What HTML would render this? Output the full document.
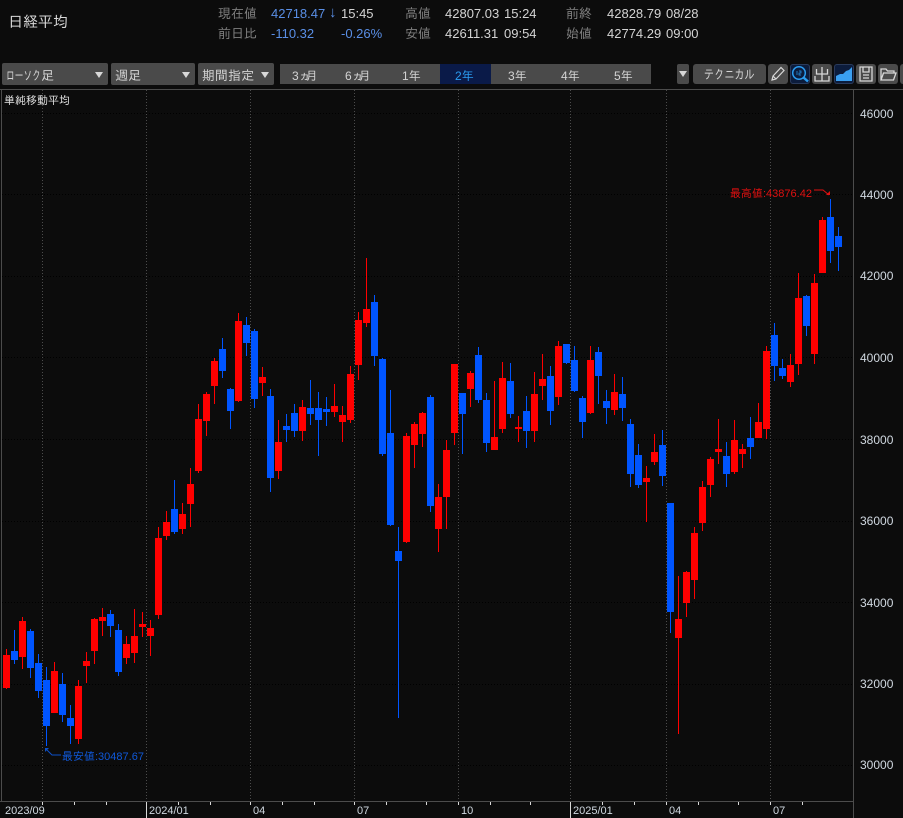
<!DOCTYPE html>
<html lang="ja"><head><meta charset="utf-8"><title>日経平均</title>
<style>
html,body{margin:0;padding:0;background:#0c0c0c}
#p{position:relative;width:903px;height:818px;overflow:hidden;background:#0c0c0c;font-family:"Liberation Sans","IPAGothic","Noto Sans CJK JP",sans-serif;font-size:13px;color:#d4d4d4}
.t{position:absolute;white-space:nowrap;line-height:16px}
.l{color:#808080}.b{color:#5a8fe6}
.n{display:inline-block;transform-origin:left center}
.k{letter-spacing:-5px}
.box{position:absolute;background:#4a4a4a;border-radius:2px}
.tri{position:absolute;width:0;height:0;border-left:4.5px solid transparent;border-right:4.5px solid transparent;border-top:6px solid #d8d8d8}
.ic{position:absolute;top:64px;width:20px;height:20px;background:#4a4a4a;border-radius:3px}
.ic.on{background:#0c1c3c;box-shadow:inset 0 0 0 1px #2a3a5a}
.ic svg{position:absolute;left:0;top:0}
.y{position:absolute;left:860px;font-size:12px;line-height:14px;color:#d0d8e0}
.x{position:absolute;top:804px;font-size:11px;line-height:14px;color:#d0d8e0}
</style></head><body><div id="p">

<div class="t" style="left:8px;top:15px;font-size:15px;color:#d8d8d8">日経平均</div>
<div class="t l" style="left:218px;top:6px">現在値</div>
<div class="t b" style="left:271px;top:6px">42718.47</div>
<div class="t b" style="left:329px;top:5px;font-size:15px">↓</div>
<div class="t" style="left:341px;top:6px">15:45</div>
<div class="t l" style="left:405px;top:6px">高値</div>
<div class="t" style="left:445px;top:6px">42807.03</div>
<div class="t" style="left:504px;top:6px">15:24</div>
<div class="t l" style="left:566px;top:6px">前終</div>
<div class="t" style="left:607px;top:6px">42828.79</div>
<div class="t" style="left:666px;top:6px">08/28</div>
<div class="t l" style="left:218px;top:26px">前日比</div>
<div class="t b" style="left:271px;top:26px">-110.32</div>
<div class="t b" style="left:341px;top:26px">-0.26%</div>
<div class="t l" style="left:405px;top:26px">安値</div>
<div class="t" style="left:445px;top:26px">42611.31</div>
<div class="t" style="left:504px;top:26px">09:54</div>
<div class="t l" style="left:566px;top:26px">始値</div>
<div class="t" style="left:607px;top:26px">42774.29</div>
<div class="t" style="left:666px;top:26px">09:00</div>

<div class="box" style="left:2px;top:63px;width:106px;height:22px"></div>
<div class="t" style="left:6px;top:68px"><span class="n" style="width:35px;transform:scaleX(.67)">ローソク</span>足</div><div class="tri" style="left:95px;top:72px"></div>
<div class="box" style="left:111px;top:63px;width:84px;height:22px"></div>
<div class="t" style="left:115px;top:68px">週足</div><div class="tri" style="left:182px;top:72px"></div>
<div class="box" style="left:198px;top:63px;width:76px;height:22px"></div>
<div class="t" style="left:202px;top:68px">期間指定</div><div class="tri" style="left:261px;top:72px"></div>

<div class="box" style="left:280px;top:64px;width:371px;height:20px;border-radius:0"></div>
<div style="position:absolute;left:440px;top:64px;width:51px;height:20px;background:#0a1a48"></div>
<div class="t" style="left:292px;top:68px;font-size:12px">3<span class="k">ヵ</span>月</div>
<div class="t" style="left:345px;top:68px;font-size:12px">6<span class="k">ヵ</span>月</div>
<div class="t" style="left:402px;top:68px;font-size:12px">1年</div>
<div class="t" style="left:455px;top:68px;font-size:12px;color:#2a9cf0">2年</div>
<div class="t" style="left:508px;top:68px;font-size:12px">3年</div>
<div class="t" style="left:561px;top:68px;font-size:12px">4年</div>
<div class="t" style="left:614px;top:68px;font-size:12px">5年</div>

<div class="box" style="left:677px;top:64px;width:12px;height:20px"></div><div class="tri" style="left:678.5px;top:71px"></div>
<div class="box" style="left:693px;top:64px;width:73px;height:20px;border-radius:3px"></div>
<div class="t" style="left:704px;top:67px;font-size:13px"><span class="n" style="width:51px;transform:scaleX(.78)">テクニカル</span></div>

<div class="ic" style="left:768px"><svg width="20" height="20" fill="none" stroke="#d8d8d8" stroke-width="1.2"><path d="M4 16l1-4 8-8.500 3 3-8 8.500zM5 12l3 3"/></svg></div>
<div class="ic on" style="left:790px"><svg width="20" height="20" fill="none" stroke="#2a9cf0"><circle cx="9" cy="9" r="6.300" stroke-width="1.500"/><path d="M13.500 13.500l4.500 4" stroke-width="2.500"/><path d="M7 7v4M9 7h2v2h-2v2h2" stroke-width=".7"/></svg></div>
<div class="ic" style="left:812px"><svg width="20" height="20" fill="none" stroke="#d8d8d8" stroke-width="1.300"><path d="M10 3v14M4.500 5v5h11V5M3 12v5h14v-5"/></svg></div>
<div class="ic on" style="left:834px"><svg width="20" height="20"><path d="M2 17v-5l4-2 3 0 3-3 3-1 3-3v14z" fill="#3a9ff0"/></svg></div>
<div class="ic" style="left:856px"><svg width="20" height="20" fill="none" stroke="#d8d8d8" stroke-width="1.300"><path d="M4 3h12v14H4zM7 3v5h6V3M7 11h6M7 14h6"/></svg></div>
<div class="ic" style="left:878px"><svg width="20" height="20" fill="none" stroke="#d8d8d8" stroke-width="1.300"><path d="M3 16V5h5l1.500 2H16v2M3 16l2.500-7H18l-2.500 7z"/></svg></div>
<div class="ic" style="left:900px"></div>

<svg width="903" height="818" style="position:absolute;left:0;top:0" shape-rendering="crispEdges">
<g stroke="#000" stroke-width="1" stroke-dasharray="1 2" fill="none">
<path d="M2 113.500H853M2 194.500H853M2 276.500H853M2 357.500H853M2 439.500H853M2 521.500H853M2 602.500H853M2 684.500H853M2 765.500H853"/>
</g>
<g stroke="#4c4c4c" stroke-width="1" stroke-dasharray="1 2" fill="none">
<path d="M42.500 90V801M146.500 90V801M250.500 90V801M354.500 90V801M458.500 90V801M570.500 90V801M666.500 90V801M770.500 90V801"/>
</g>
<path fill="#ff0000" d="M6 649h1V689h-1zM3 655h7V688h-7zM22 617h1V669h-1zM19 621h7V657h-7zM54 662h1V713h-1zM51 671h7V713h-7zM78 680h1V744h-1zM75 686h7V739h-7zM86 652h1V683h-1zM83 661h7V666h-7zM94 618h1V664h-1zM91 619h7V651h-7zM102 608h1V636h-1zM99 617h7V621h-7zM126 636h1V664h-1zM123 644h7V658h-7zM134 609h1V663h-1zM131 636h7V653h-7zM142 612h1V637h-1zM139 624h7V627h-7zM150 620h1V656h-1zM147 628h7V636h-7zM158 527h1V619h-1zM155 538h7V615h-7zM166 511h1V540h-1zM163 522h7V536h-7zM182 503h1V534h-1zM179 514h7V529h-7zM190 468h1V527h-1zM187 484h7V504h-7zM198 404h1V473h-1zM195 419h7V471h-7zM206 392h1V436h-1zM203 394h7V421h-7zM214 358h1V404h-1zM211 361h7V386h-7zM238 313h1V402h-1zM235 321h7V401h-7zM262 367h1V396h-1zM259 377h7V383h-7zM278 420h1V479h-1zM275 442h7V471h-7zM302 400h1V441h-1zM299 407h7V431h-7zM334 384h1V417h-1zM331 406h7V412h-7zM342 406h1V442h-1zM339 415h7V422h-7zM350 366h1V423h-1zM347 374h7V420h-7zM358 312h1V380h-1zM355 320h7V365h-7zM366 258h1V327h-1zM363 309h7V323h-7zM406 433h1V543h-1zM403 436h7V542h-7zM414 422h1V468h-1zM411 424h7V445h-7zM422 412h1V447h-1zM419 413h7V434h-7zM438 484h1V552h-1zM435 497h7V529h-7zM446 440h1V529h-1zM443 450h7V497h-7zM454 364h1V445h-1zM451 364h7V433h-7zM470 371h1V407h-1zM467 373h7V389h-7zM494 381h1V450h-1zM491 437h7V450h-7zM502 362h1V433h-1zM499 378h7V429h-7zM518 416h1V442h-1zM515 427h7V429h-7zM534 372h1V442h-1zM531 394h7V431h-7zM542 354h1V400h-1zM539 379h7V386h-7zM558 341h1V405h-1zM555 346h7V397h-7zM590 346h1V414h-1zM587 360h7V413h-7zM614 374h1V415h-1zM611 392h7V410h-7zM646 466h1V522h-1zM643 478h7V482h-7zM654 434h1V465h-1zM651 452h7V462h-7zM678 576h1V734h-1zM675 619h7V638h-7zM686 571h1V617h-1zM683 572h7V603h-7zM694 527h1V599h-1zM691 533h7V580h-7zM702 481h1V531h-1zM699 487h7V523h-7zM710 457h1V497h-1zM707 459h7V485h-7zM718 419h1V464h-1zM715 449h7V452h-7zM734 420h1V474h-1zM731 440h7V472h-7zM742 444h1V468h-1zM739 449h7V454h-7zM758 403h1V438h-1zM755 422h7V438h-7zM766 346h1V439h-1zM763 351h7V429h-7zM790 354h1V387h-1zM787 365h7V382h-7zM798 273h1V375h-1zM795 298h7V364h-7zM814 274h1V364h-1zM811 283h7V354h-7zM822 217h1V273h-1zM819 220h7V273h-7z"/>
<path fill="#0055ff" d="M14 630h1V664h-1zM11 651h7V660h-7zM30 629h1V678h-1zM27 631h7V668h-7zM38 654h1V698h-1zM35 663h7V691h-7zM46 667h1V746h-1zM43 680h7V726h-7zM62 673h1V722h-1zM59 684h7V715h-7zM70 705h1V744h-1zM67 718h7V726h-7zM110 610h1V637h-1zM107 614h7V626h-7zM118 624h1V676h-1zM115 630h7V672h-7zM174 480h1V534h-1zM171 509h7V532h-7zM222 338h1V378h-1zM219 349h7V371h-7zM230 388h1V429h-1zM227 389h7V411h-7zM246 317h1V356h-1zM243 325h7V343h-7zM254 329h1V408h-1zM251 331h7V399h-7zM270 389h1V492h-1zM267 396h7V478h-7zM286 414h1V442h-1zM283 426h7V430h-7zM294 404h1V437h-1zM291 413h7V431h-7zM310 380h1V425h-1zM307 408h7V414h-7zM318 392h1V456h-1zM315 408h7V420h-7zM326 397h1V426h-1zM323 409h7V412h-7zM374 295h1V366h-1zM371 302h7V356h-7zM382 358h1V456h-1zM379 359h7V454h-7zM390 390h1V526h-1zM387 433h7V525h-7zM398 527h1V718h-1zM395 551h7V561h-7zM430 395h1V512h-1zM427 397h7V506h-7zM462 393h1V454h-1zM459 393h7V414h-7zM478 347h1V403h-1zM475 355h7V400h-7zM486 393h1V452h-1zM483 400h7V443h-7zM510 363h1V418h-1zM507 381h7V414h-7zM526 396h1V448h-1zM523 411h7V431h-7zM550 366h1V425h-1zM547 376h7V411h-7zM566 344h1V364h-1zM563 344h7V363h-7zM574 346h1V392h-1zM571 360h7V391h-7zM582 396h1V438h-1zM579 398h7V422h-7zM598 347h1V404h-1zM595 352h7V376h-7zM606 390h1V424h-1zM603 401h7V408h-7zM622 377h1V421h-1zM619 394h7V408h-7zM630 419h1V487h-1zM627 424h7V474h-7zM638 444h1V488h-1zM635 455h7V485h-7zM662 430h1V486h-1zM659 445h7V476h-7zM670 503h1V633h-1zM667 503h7V612h-7zM726 442h1V487h-1zM723 456h7V474h-7zM750 417h1V459h-1zM747 438h7V447h-7zM774 323h1V381h-1zM771 335h7V366h-7zM782 359h1V379h-1zM779 368h7V376h-7zM806 295h1V336h-1zM803 296h7V326h-7zM830 199h1V263h-1zM827 217h7V251h-7zM838 227h1V271h-1zM835 236h7V247h-7z"/>
<g fill="none" stroke="#4c4c4c"><path d="M0 89.500H903M1.500 89V802M0 801.500H853M853.500 89V818"/></g>
<path fill="#d8d8d8" d="M42 802h1v3h-1zM74 802h1v3h-1zM106 802h1v3h-1zM178 802h1v3h-1zM210 802h1v3h-1zM250 802h1v3h-1zM282 802h1v3h-1zM314 802h1v3h-1zM354 802h1v3h-1zM386 802h1v3h-1zM426 802h1v3h-1zM458 802h1v3h-1zM490 802h1v3h-1zM530 802h1v3h-1zM602 802h1v3h-1zM634 802h1v3h-1zM666 802h1v3h-1zM698 802h1v3h-1zM738 802h1v3h-1zM770 802h1v3h-1zM802 802h1v3h-1zM146 802h1v16h-1zM570 802h1v16h-1z"/>
</svg>

<svg width="903" height="818" style="position:absolute;left:0;top:0" fill="none">
<path d="M814 190h9l6 5" stroke="#e01010" stroke-width="1"/><path d="M826 195h4v-4z" fill="#e01010"/>
<path d="M47 750l5 5h9" stroke="#0d50c8" stroke-width="1"/><path d="M45 748h4l-4 4z" fill="#0d50c8"/>
</svg>

<div class="t" style="left:4px;top:93px;font-size:11px;color:#e0e0e0">単純移動平均</div>
<div class="t" style="left:730px;top:186px;font-size:11px;color:#e01010">最高値:43876.42</div>
<div class="t" style="left:62px;top:749px;font-size:11px;color:#1058d8">最安値:30487.67</div>

<div class="y" style="top:107px">46000</div>
<div class="y" style="top:188px">44000</div>
<div class="y" style="top:269px">42000</div>
<div class="y" style="top:351px">40000</div>
<div class="y" style="top:433px">38000</div>
<div class="y" style="top:514px">36000</div>
<div class="y" style="top:596px">34000</div>
<div class="y" style="top:677px">32000</div>
<div class="y" style="top:758px">30000</div>

<div class="x" style="left:5px">2023/09</div>
<div class="x" style="left:149px">2024/01</div>
<div class="x" style="left:253px">04</div>
<div class="x" style="left:357px">07</div>
<div class="x" style="left:461px">10</div>
<div class="x" style="left:573px">2025/01</div>
<div class="x" style="left:669px">04</div>
<div class="x" style="left:773px">07</div>
</div></body></html>
